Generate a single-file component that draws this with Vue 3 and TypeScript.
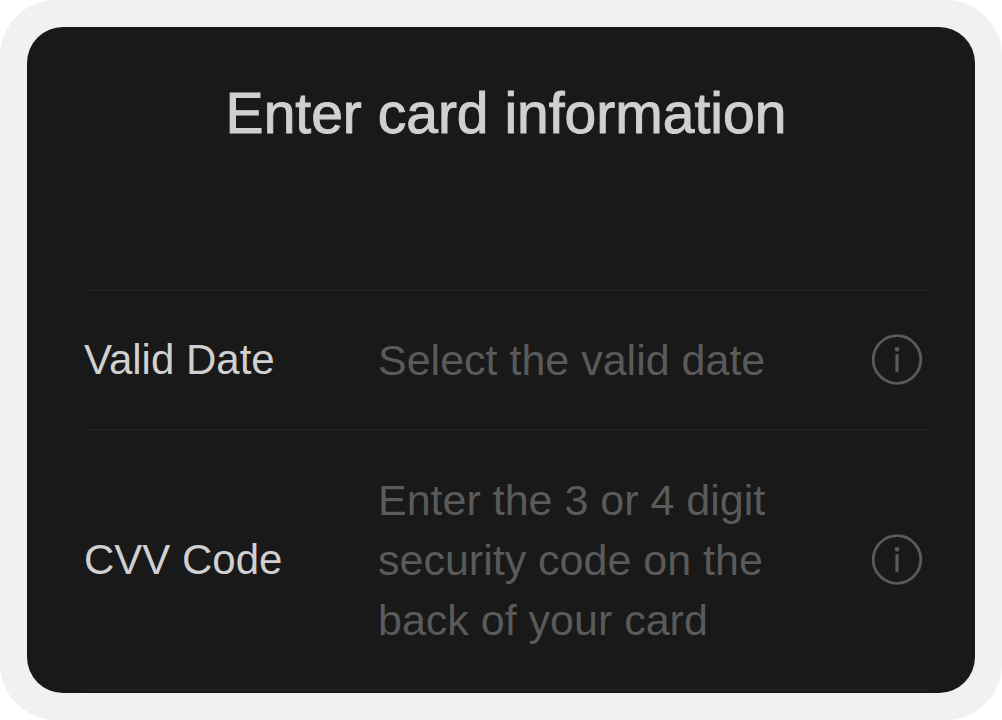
<script setup lang="ts">
interface Field {
  id: string
  label: string
  placeholder: string
  multiline: boolean
}

const fields: Field[] = [
  { id: 'valid-date', label: 'Valid Date', placeholder: 'Select the valid date', multiline: false },
  { id: 'cvv-code', label: 'CVV Code', placeholder: 'Enter the 3 or 4 digit security code on the back of your card', multiline: true },
]
</script>

<template>
  <main class="frame">
    <form class="card" @submit.prevent>
      <h1 class="title">Enter card information</h1>
      <div class="fields">
        <div v-for="field in fields" :key="field.id" class="row">
          <label class="label" :for="field.id">{{ field.label }}</label>
          <textarea v-if="field.multiline" :id="field.id" class="control" rows="3" :placeholder="field.placeholder"></textarea>
          <input v-else :id="field.id" class="control" type="text" :placeholder="field.placeholder" />
          <button class="info" type="button" :aria-label="`About ${field.label}`">
            <svg viewBox="0 0 52 52" fill="none" aria-hidden="true">
              <circle cx="26" cy="25.5" r="23.8" stroke="currentColor" stroke-width="2.8" />
              <circle cx="26" cy="15.3" r="2.4" fill="currentColor" />
              <path d="M26 21.5V36.5" stroke="currentColor" stroke-width="3.2" stroke-linecap="round" />
            </svg>
          </button>
        </div>
      </div>
    </form>
  </main>
</template>

<style>
body {
  margin: 0;
  background: #fff;
}
</style>

<style scoped>
.frame {
  box-sizing: border-box;
  min-height: 100vh;
  padding: 27px;
  display: flex;
  background: #f1f1f1;
  border-radius: 56px;
  font-family: "Liberation Sans", Arial, sans-serif;
}

.card {
  flex: 1;
  box-sizing: border-box;
  padding: 52px 47px 2px 57px;
  background: #191919;
  border-radius: 36px;
  overflow: hidden;
}

.title {
  margin: 0 0 142px;
  text-align: center;
  font-size: 57px;
  line-height: 68px;
  font-weight: 400;
  color: #d0d0d0;
  -webkit-text-stroke: 1px #d0d0d0;
}

.fields {
  border-top: 2px solid #202020;
}

.row {
  display: grid;
  grid-template-columns: 294px minmax(0, 1fr) 52px;
  align-items: center;
  padding: 39px 5px 39px 0;
  border-bottom: 2px solid #202020;
}

.label {
  font-size: 42px;
  line-height: 60px;
  color: #d0d0d0;
}

.control {
  display: block;
  box-sizing: border-box;
  width: 100%;
  max-width: 420px;
  height: 60px;
  margin: 0;
  padding: 0;
  border: 0;
  outline: 0;
  resize: none;
  overflow: hidden;
  background: transparent;
  font-family: inherit;
  font-size: 43px;
  line-height: 60px;
  color: #d0d0d0;
}

textarea.control {
  height: 180px;
}

.control::placeholder {
  color: #5a5a5a;
  opacity: 1;
}

.info {
  width: 52px;
  height: 52px;
  padding: 0;
  border: 0;
  background: transparent;
  color: #5a5a5a;
}

.info svg {
  display: block;
  width: 52px;
  height: 52px;
}
</style>
